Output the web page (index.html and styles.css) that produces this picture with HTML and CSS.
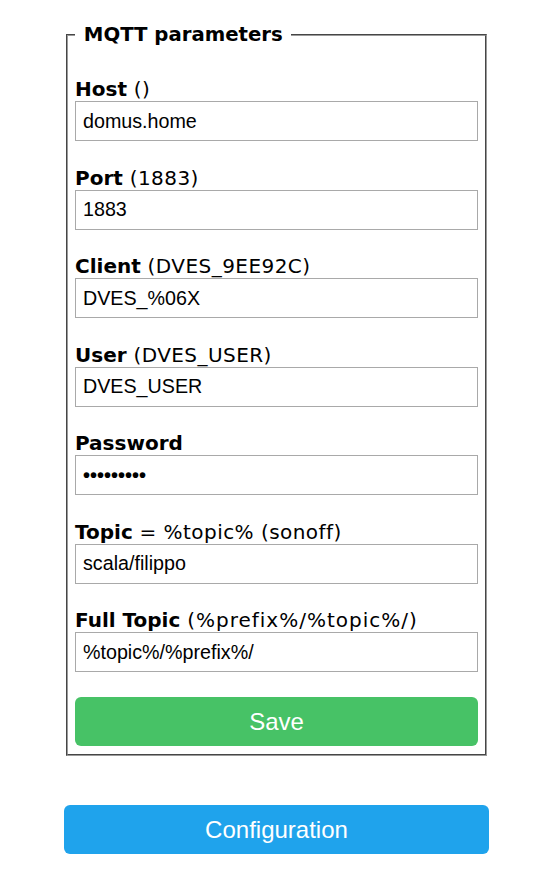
FILE: index.html
```html
<!DOCTYPE html>
<html>
<head>
<meta charset="utf-8">
<link rel="stylesheet" href="styles.css">
</head>
<body>
<div class="wrap">
  <fieldset class="box">
    <legend class="legend"><b>&nbsp;MQTT parameters&nbsp;</b></legend>
    <form class="form">
      <div class="field">
        <div class="label"><b>Host</b> ()</div>
        <input class="inp" type="text" value="domus.home">
      </div>
      <div class="field">
        <div class="label"><b>Port</b> (1883)</div>
        <input class="inp" type="text" value="1883">
      </div>
      <div class="field">
        <div class="label"><b>Client</b> (DVES_9EE92C)</div>
        <input class="inp" type="text" value="DVES_%06X">
      </div>
      <div class="field">
        <div class="label"><b>User</b> (DVES_USER)</div>
        <input class="inp" type="text" value="DVES_USER">
      </div>
      <div class="field">
        <div class="label"><b>Password</b></div>
        <input class="inp pw" type="password" value="123456789">
      </div>
      <div class="field">
        <div class="label"><b>Topic</b> = %topic% (sonoff)</div>
        <input class="inp" type="text" value="scala/filippo">
      </div>
      <div class="field">
        <div class="label"><b>Full Topic</b> <span class="wide">(%prefix%/%topic%/)</span></div>
        <input class="inp" type="text" value="%topic%/%prefix%/">
      </div>
      <button class="btn save" type="button">Save</button>
    </form>
  </fieldset>
  <button class="btn conf" type="button">Configuration</button>
</div>
</body>
</html>
```
FILE: styles.css
```css
html, body {
  margin: 0;
  padding: 0;
  background: #fff;
}
body {
  padding: 23px 0 0 64px;
  font-family: "DejaVu Sans", Verdana, sans-serif;
  font-size: 20px;
  color: #000;
}
.wrap {
  width: 425px;
  display: flex;
  flex-direction: column;
}
.box {
  margin: 0 2px;
  padding: 30px 7px 7.5px 7px;
  border: 2px groove #9a9a9a;
  min-width: 0;
}
.legend {
  padding: 0 1px 0 2px;
  line-height: 24px;
  font-size: 19.7px;
}
.form {
  display: flex;
  flex-direction: column;
  margin: 0;
}
.field {
  display: flex;
  flex-direction: column;
  margin-bottom: 24.5px;
}
.label {
  line-height: 24px;
  font-size: 20px;
  letter-spacing: 0.45px;
  white-space: nowrap;
}
.label b {
  letter-spacing: 0;
}
.wide {
  letter-spacing: 1px;
}
.inp {
  box-sizing: border-box;
  width: 100%;
  height: 40px;
  margin: 0;
  padding: 0 7px;
  border: 1px solid #a9a9a9;
  border-radius: 0;
  font-family: "Liberation Sans", Arial, sans-serif;
  font-size: 19.7px;
  color: #000;
  background: #fff;
  outline: none;
}
.pw {
  font-family: "Liberation Sans", Arial, sans-serif;
  font-size: 20px;
  font-weight: bold;
}
.btn {
  display: block;
  width: 100%;
  border: 0;
  border-radius: 6px;
  color: #fff;
  font-family: "Liberation Sans", Arial, sans-serif;
  font-size: 24px;
  line-height: 49px;
  height: 49.5px;
  padding: 0;
  margin: 0;
  text-align: center;
}
.save {
  background: #47c266;
}
.conf {
  margin-top: 49px;
  background: #1fa3ec;
}
```
